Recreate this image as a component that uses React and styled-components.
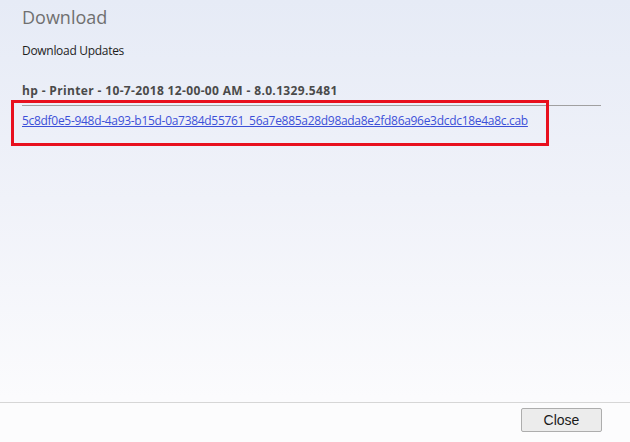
import styled, { createGlobalStyle } from "styled-components"

const GlobalStyle = createGlobalStyle`
  html, body {
    margin: 0;
    padding: 0;
  }
  body {
    width: 630px;
    height: 442px;
    overflow: hidden;
    font-family: "Open Sans", "Noto Sans", sans-serif;
  }
`;

const Dialog = styled.div`
  /* 창 크기 */
  width: 630px;
  height: 442px;
  display: flex;
  flex-direction: column;
  background: linear-gradient(180deg, #e6ebf6 0%, #f0f2f9 45%, #fbfbfd 90%, #fcfcfd 100%);
`;

const Body = styled.div`
  position: relative;
  flex: 1;
  padding: 5px 29px 0 22px;
`;

const Title = styled.h1`
  margin: 0;
  font-size: 18px;
  font-weight: 400;
  line-height: 24px;
  color: #707070;
`;

const Subtitle = styled.div`
  margin-top: 14px;
  font-size: 12px;
  letter-spacing: -0.3px;
  line-height: 16px;
  color: #1e1e1e;
`;

const Section = styled.div`
  margin-top: 24px;
`;

const SectionHeader = styled.div`
  font-size: 12px;
  font-weight: 700;
  letter-spacing: 0.35px;
  line-height: 16px;
  color: #4a4a4a;
  padding-bottom: 6px;
  border-bottom: 1px solid #a0a0a0;
`;

const FileLink = styled.a`
  display: inline-block;
  margin-top: 7px;
  font-size: 12px;
  letter-spacing: -0.3px;
  line-height: 16px;
  color: #3c50d8;
  text-decoration: underline;
  cursor: pointer;
`;

/* 스크린샷 위 빨간 강조 박스 */
const Highlight = styled.div`
  position: absolute;
  left: 11px;
  top: 100px;
  width: 532px;
  height: 40px;
  border: 3px solid #e8101e;
  pointer-events: none;
`;

const Footer = styled.div`
  height: 40px;
  border-top: 1px solid #d6d6d6;
  display: flex;
  align-items: flex-start;
  justify-content: flex-end;
  padding: 5px 28px 0 0;
  box-sizing: border-box;
  background: #fcfcfd;
`;

const Button = styled.button`
  width: 81px;
  height: 24px;
  font-family: "Liberation Sans", Arial, sans-serif;
  font-size: 14px;
  color: #1a1a1a;
  background: #ececec;
  border: 1px solid #adadad;
  border-radius: 2px;
  padding: 0;
`;

const App = () => {
  return (
    <>
      <GlobalStyle />
      <Dialog>
        <Body>
          <Title>Download</Title>
          <Subtitle>Download Updates</Subtitle>
          <Section>
            <SectionHeader>hp - Printer - 10-7-2018 12-00-00 AM - 8.0.1329.5481</SectionHeader>
            <FileLink>5c8df0e5-948d-4a93-b15d-0a7384d55761_56a7e885a28d98ada8e2fd86a96e3dcdc18e4a8c.cab</FileLink>
          </Section>
          <Highlight />
        </Body>
        <Footer>
          <Button>Close</Button>
        </Footer>
      </Dialog>
    </>
  );
};

export default App;
